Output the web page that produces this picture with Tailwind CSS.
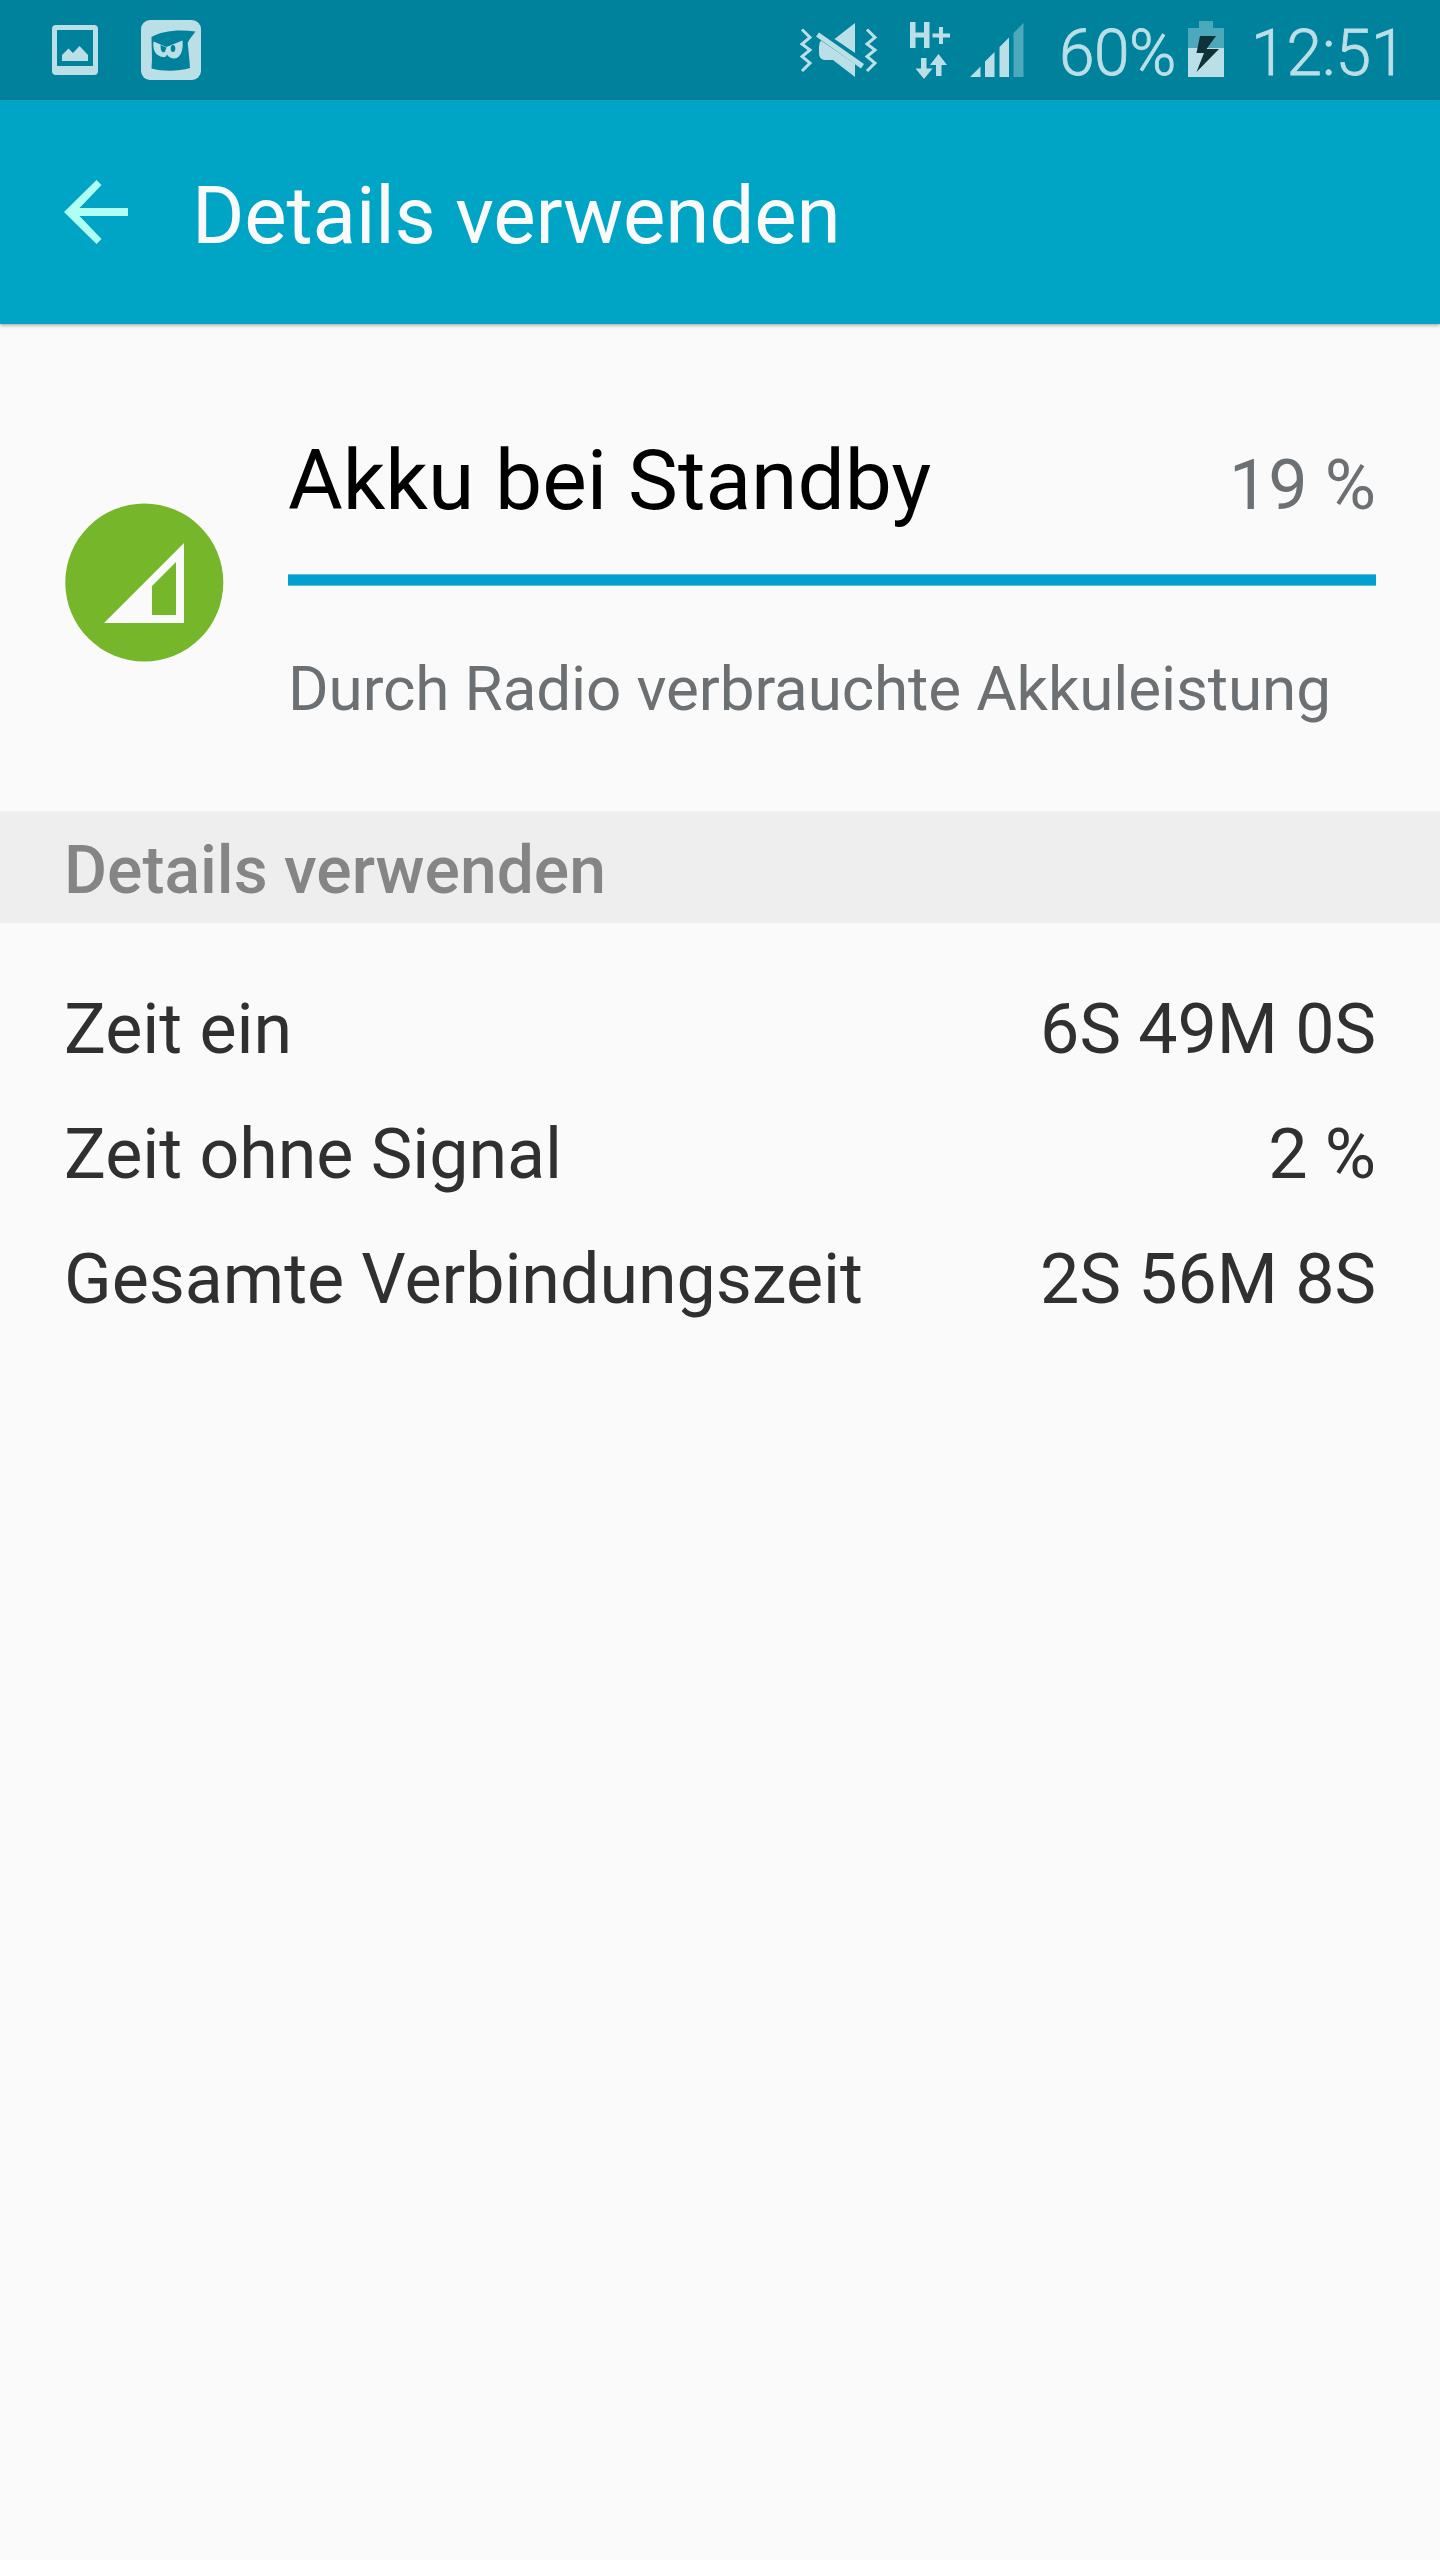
<!DOCTYPE html>
<html lang="de">

<head>
    <meta charset="UTF-8">
    <meta name="viewport" content="width=device-width, initial-scale=1.0">
    <title>Details verwenden</title>
    <script src="https://cdn.jsdelivr.net/npm/@tailwindcss/browser@4"></script>
</head>

<body class="w-[1440px] h-[2560px] bg-[#fafafa] font-[Roboto,sans-serif] overflow-hidden">
    <!-- status bar -->
    <div class="flex items-start h-[100px] bg-[#00829d] text-[#bbdfe6]">
        <svg class="ml-[52px] mt-[25px]" width="46" height="50" viewBox="0 0 46 50" fill="currentColor">
            <path fill-rule="evenodd"
                d="M4 0H42Q46 0 46 4V46Q46 50 42 50H4Q0 50 0 46V4Q0 0 4 0ZM5 5V41H41V5ZM10 36V30L16.500 23.500L21 28L27.500 21L36 30V36Z" />
        </svg>
        <svg class="ml-[43px] mt-5" width="60" height="60" viewBox="0 0 60 60">
            <rect width="60" height="60" rx="9" fill="currentColor" />
            <path fill="#00829d"
                d="M10.500 17C21 11 36 9 54.500 11.500C52 15.500 48.500 18.500 46.700 23C47.500 31 48.500 40 49 48C37 51.500 22 51.500 10.500 48.500C11.500 38 10.500 28 10.500 17Z" />
            <path fill="currentColor"
                d="M12.500 21.500L25.500 27L41.500 20.500C42.500 28 40.500 38 33.500 38.500C29.500 38.500 27 36.500 26 34.500C25.500 36.500 23.500 37.500 22 37C14.500 36 11.500 30 12.500 21.500Z" />
            <path fill="#00829d" d="M19.500 25L25.500 27.500L24.500 30C24.500 33 21 33 20.200 30.500C19.600 28.500 19.800 27 19.500 25Z" />
            <ellipse cx="32" cy="28.500" rx="2.300" ry="3.500" fill="#00829d" />
        </svg>

        <svg class="ml-[599px] mt-[22px]" width="78" height="56" viewBox="0 0 78 56" fill="currentColor">
            <path fill="none" stroke="currentColor" stroke-width="3"
                d="M2 7.500L10 15.500L2 22L10 28L2 34.500L10 41L2 49M67 7.500L75 15.500L67 22L75 28L67 34.500L75 41L67 49" />
            <path d="M55 1V31L34.500 17Z" />
            <path d="M21 18.500L55 42V55L33 38H25Q19 37.500 19 31V25Q19 20.500 21 18.500Z" />
            <path d="M19 10.500L64 42L61 46.500L16 14.500Z" />
        </svg>
        <svg class="ml-[31px] mt-[22px]" width="42" height="58" viewBox="0 0 42 58" fill="currentColor">
            <path d="M1 0H6.500V10.500H15V0H20.500V26H15V15.500H6.500V26H1ZM30 5H34V11.500H41V15.500H34V22H30V15.500H23.500V11.500H30Z" />
            <path d="M12 36H17.500V46.500H23.500L15 57L6.500 46.500H12ZM29.500 32L38 43H32.500V54H27V43H21Z" />
        </svg>
        <svg class="ml-[19px] mt-[23px]" width="54" height="54" viewBox="0 0 54 54" fill="currentColor">
            <path d="M0 54L10.500 43.500V54ZM15 38.500L24.500 29V54H15ZM29.500 24L39 14.500V54H29.500Z" />
            <path fill="#4ca8bb" d="M43.500 10L53.500 0V54H43.500Z" />
        </svg>
        <span class="ml-[35px] w-[129px] mt-[16px] text-[64px] leading-[75px] font-light tracking-[-0.5px] [-webkit-text-stroke:0.8px_#bbdfe6]">60%</span>
        <svg class="mt-[21px] shrink-0" width="36" height="56" viewBox="0 0 36 56">
            <path fill="#4ca8bb" d="M11 0H25V7H36V27H0V7H11Z" />
            <path fill="currentColor" d="M0 27H36V56H0Z" />
            <path fill="#0f3238" d="M12 15H28L18.500 28H31L8.500 51L16 32H8.500Z" />
        </svg>
        <span class="ml-[27px] mt-[16px] text-[64px] leading-[75px] font-light [-webkit-text-stroke:0.8px_#bbdfe6]">12:51</span>
    </div>

    <!-- action bar -->
    <div class="relative flex items-center h-[224px] pl-16 gap-16 bg-[#00a5c5] shadow-[0_1px_4px_rgba(0,0,0,0.4)]">
        <svg width="64" height="64" viewBox="0 0 64 64" fill="#b0fff4">
            <path d="M32.500 0L37.500 5L15.500 28H64V36H15.500L37.500 59L32.500 64L0 32Z" />
        </svg>
        <h1 class="pt-[7px] text-[80px] leading-[94px] tracking-[-0.18px] text-[#fafafa]">Details verwenden</h1>
    </div>

    <!-- battery usage -->
    <div class="flex h-[487px] pl-16 pr-16">
        <svg class="mt-[178px] shrink-0" width="160" height="160" viewBox="0 0 160 160">
            <circle cx="80.300" cy="80.500" r="79" fill="#75b62b" />
            <path fill="#fafafa" fill-rule="evenodd" d="M40 121L120 41V121ZM88 84V113H112V60Z" />
        </svg>
        <div class="ml-16 flex-1">
            <div class="flex items-baseline justify-between mt-[108px] h-[142px]">
                <h2 class="text-[84px] leading-[98px] text-black">Akku bei Standby</h2>
                <span class="text-[70px] tracking-[-0.1px] text-[#6c7073]">19 %</span>
            </div>
            <div class="h-3 bg-[#00a0d0] border-y border-[#5fbfdb]"></div>
            <p class="mt-[66px] text-[62px] leading-[74px] tracking-[-0.12px] text-[#6c7073]">Durch Radio verbrauchte Akkuleistung</p>
        </div>
    </div>

    <div class="h-28 pl-16 pt-[21px] bg-[#eeeeee] text-[66px] leading-[78px] font-medium text-[#858585]">Details verwenden</div>

    <div class="flex flex-col px-16 pt-[65px] text-[70px] leading-[83px] tracking-[-0.05px] gap-[42px] text-[#303030]">
        <div class="flex justify-between"><span>Zeit ein</span><span>6S 49M 0S</span></div>
        <div class="flex justify-between"><span>Zeit ohne Signal</span><span>2 %</span></div>
        <div class="flex justify-between"><span>Gesamte Verbindungszeit</span><span>2S 56M 8S</span></div>
    </div>
</body>

</html>
